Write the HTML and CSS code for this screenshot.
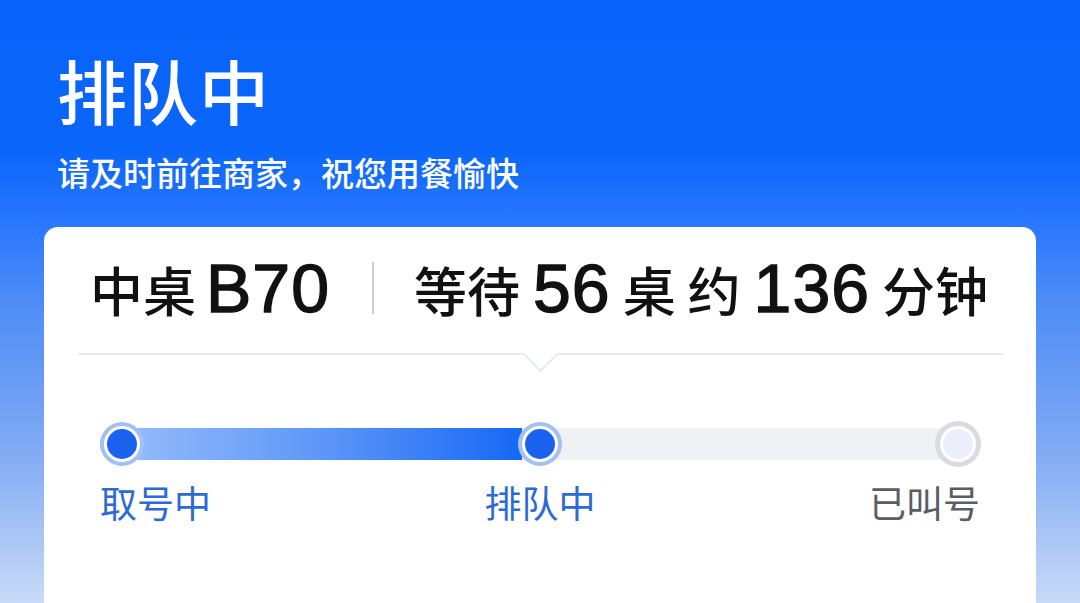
FILE: index.html
```html
<!DOCTYPE html>
<html lang="zh-CN">
<head>
  <meta charset="UTF-8">
  <title>排队中</title>
  <link rel="stylesheet" href="styles.css">
</head>
<body>
  <div class="header">
    <h1 class="title">排队中</h1>
    <p class="subtitle">请及时前往商家，祝您用餐愉快</p>
  </div>

  <div class="card">
    <div class="queue-row">
      <span class="table-no">中桌<span class="num">B70</span></span>
      <span class="divider"></span>
      <span class="wait">等待<span class="num">56</span>桌 约<span class="num">136</span>分钟</span>
    </div>

    <div class="sep"></div>

    <div class="progress">
      <div class="track">
        <span class="dot done"></span>
        <span class="dot done"></span>
        <span class="dot todo"></span>
      </div>
      <div class="labels">
        <span class="label active">取号中</span>
        <span class="label active">排队中</span>
        <span class="label">已叫号</span>
      </div>
    </div>
  </div>
</body>
</html>
```

FILE: styles.css
```css
html, body {
  margin: 0;
  height: 100%;
}
body {
  display: flex;
  flex-direction: column;
  font-family: "Noto Sans CJK SC", "Liberation Sans", sans-serif;
  background: linear-gradient(to bottom, #0862fa 0px, #0a66fa 150px, #2a78fe 225px, #4d8cf6 300px, #80aaf4 450px, #c8daf7 603px);
  overflow: hidden;
}
.header {
  padding: 55px 57px 0;
  color: #fff;
}
.title {
  margin: 0;
  font-size: 70px;
  line-height: 70px;
  font-weight: 500;
  letter-spacing: 1px;
}
.subtitle {
  margin: 30px 0 0;
  font-size: 33px;
  line-height: 34px;
  font-weight: 500;
}
.card {
  flex: 1;
  margin: 38px 44px 0;
  background: #fff;
  border-radius: 14px 14px 0 0;
  padding-top: 30px;
}
.queue-row {
  display: flex;
  align-items: center;
  height: 62px;
  padding-left: 46px;
  font-size: 53px;
  font-weight: 500;
  color: #111;
  white-space: nowrap;
}
.num {
  font-family: "Liberation Sans", sans-serif;
  font-size: 68px;
  font-weight: 400;
  letter-spacing: 1px;
  margin: 0 12px 0 13px;
  -webkit-text-stroke: 1.4px #111;
}
.table-no .num {
  margin: 0 0 0 10px;
}
.divider {
  width: 2px;
  height: 52px;
  background: #c9cbcf;
  margin: 0 40px 0 42px;
}
.sep {
  position: relative;
  margin: 34px 33px 0 34px;
  height: 0;
  border-top: 2px solid #e6ebf4;
}
.sep::after {
  content: "";
  position: absolute;
  left: 50%;
  top: -13px;
  width: 23px;
  height: 23px;
  margin-left: -13px;
  background: #fff;
  border-right: 2px solid #e6ebf4;
  border-bottom: 2px solid #e6ebf4;
  transform: rotate(45deg);
}
.progress {
  margin: 73px 56px 0;
}
.track {
  display: flex;
  justify-content: space-between;
  align-items: center;
  height: 32px;
  border-radius: 16px;
  background: linear-gradient(to right, #9cc0fb 0%, #5e97f7 25%, #1668f6 48%, #f0f1f4 48%, #f0f1f4 100%);
}
.dot {
  width: 30px;
  height: 30px;
  border-radius: 50%;
  margin: 0 7px;
}
.dot.done {
  background: #1b63ef;
  box-shadow: 0 0 0 3px #fff, 0 0 0 7px #a3bff3;
}
.dot.todo {
  background: #eceffb;
  box-shadow: 0 0 0 3px #fff, 0 0 0 8px #d9dbe0;
}
.labels {
  display: flex;
  justify-content: space-between;
  margin-top: 22px;
}
.label {
  font-size: 37px;
  line-height: 40px;
  color: #5a5e64;
  font-weight: 400;
}
.label.active {
  color: #2c6bd3;
}
```
